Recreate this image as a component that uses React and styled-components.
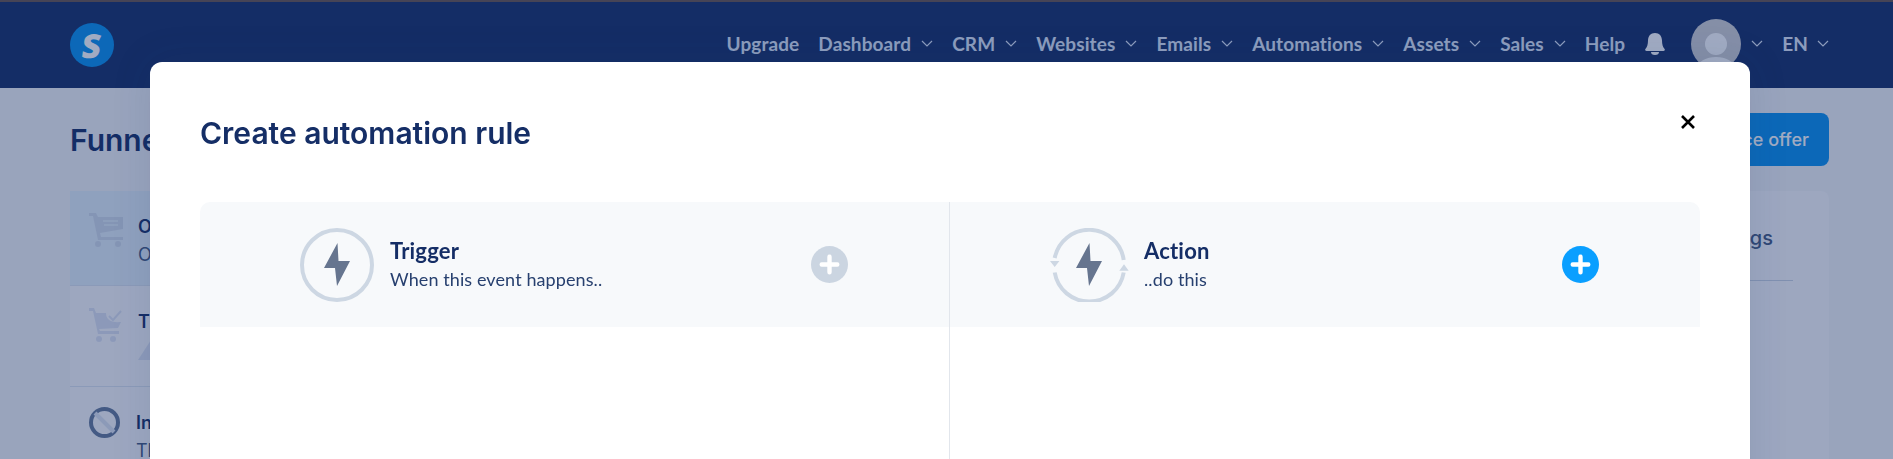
import React from "react";
import styled, { createGlobalStyle } from "styled-components";

const navy = "#152e66";

const GlobalStyle = createGlobalStyle`
html, body {
    margin: 0;
    height: 100%;
    overflow: hidden;
    background: #f2f3f6;
    font-family: "Inter", "Liberation Sans", sans-serif;
    color: ${navy};
}
* { box-sizing: border-box; }
`;

const Header = styled.header`
height: 88px;
border-top: 2px solid #68544b;
background: ${navy};
display: flex;
align-items: center;
justify-content: space-between;
padding: 0 64px 0 70px;
`;

const Logo = styled.div`
width: 44px;
height: 44px;
border-radius: 50%;
background: #0890ee;
color: #fff;
display: flex;
align-items: center;
justify-content: center;
`;

const LogoMark = styled.span`
font: 800 33px "Open Sans", sans-serif;
transform: skewX(-7deg);
`;

const Nav = styled.nav`
display: flex;
align-items: center;
height: 86px;
margin-bottom: 3px;
font: 700 19px "Lato", sans-serif;
letter-spacing: 0.1px;
color: #dee7f7;
`;

const NavItem = styled.a`
display: flex;
align-items: center;
gap: ${(p) => p.$inner ?? 10}px;
margin-right: ${(p) => p.$gap ?? 19}px;
white-space: nowrap;
`;

const Avatar = styled.div`
width: 50px;
height: 50px;
border-radius: 50%;
background: #d0d0d3;
overflow: hidden;
margin-right: 10px;
`;

const AvatarHead = styled.div`
width: 22px;
height: 22px;
border-radius: 50%;
background: #fff;
margin: 14px auto 0;
`;

const AvatarBody = styled.div`
width: 36px;
height: 20px;
border-radius: 50%;
background: #fff;
margin: 2px auto 0;
`;

const Main = styled.main`
padding: 25px 64px 0 70px;
`;

const PageHead = styled.div`
display: flex;
align-items: center;
justify-content: space-between;
height: 53px;
margin-bottom: 25px;
`;

const PageTitle = styled.h1`
margin: 0;
font-size: 30px;
font-weight: 600;
`;

const OfferButton = styled.button`
height: 53px;
padding: 0 20px;
border: 0;
border-radius: 8px;
background: #0890ee;
color: #fff;
font: 500 18px "Inter", sans-serif;
`;

const Columns = styled.div`
display: grid;
grid-template-columns: 360px 1fr;
gap: 30px;
`;

const Sidebar = styled.div`
background: #f8f9fb;
border-radius: 8px 8px 0 0;
`;

const Row = styled.div`
display: flex;
gap: ${(p) => p.$gap ?? 15}px;
height: ${(p) => p.$height}px;
padding: ${(p) => p.$top}px 19px 0;
background: ${(p) => (p.$active ? "#e2eef8" : "#f8f9fb")};
border-bottom: 1px solid #dbe3ee;
`;

const RowText = styled.div`
font-size: 18px;
line-height: 28px;
font-weight: 600;
white-space: nowrap;
padding-top: ${(p) => p.$top ?? 0}px;
`;

const RowSub = styled.div`
display: flex;
align-items: center;
gap: 6px;
font-weight: 400;
color: #44597f;
`;

const SettingsCard = styled.div`
background: #f8f9fb;
border-radius: 8px 8px 0 0;
height: 400px;
padding: 0 36px;
`;

const Tabs = styled.div`
display: flex;
justify-content: flex-end;
height: 90px;
padding: 35px 20px 0 0;
font-size: 20px;
font-weight: 500;
color: #44597f;
border-bottom: 1px solid #c9d3e2;
`;

const Overlay = styled.div`
position: fixed;
inset: 0;
padding: 62px 0 0 150px;
background: rgba(21, 46, 102, 0.4);
`;

const Modal = styled.div`
width: 1600px;
height: 600px;
padding: 52px 50px 0;
border-radius: 12px 12px 0 0;
background: #fff;
box-shadow: 0 0 40px rgba(21, 46, 102, 0.12);
`;

const ModalHead = styled.div`
display: flex;
justify-content: space-between;
height: 88px;
`;

const ModalTitle = styled.h2`
margin: 0;
font-size: 30px;
line-height: 38px;
font-weight: 600;
`;

const CloseButton = styled.button`
width: 16px;
height: 16px;
margin: 0 4px 0 0;
padding: 0;
border: 0;
background: none;
line-height: 0;
`;

const RuleGrid = styled.div`
display: grid;
grid-template-columns: 750px 1fr;
height: 400px;
`;

const RuleColumn = styled.div`
border-right: ${(p) => (p.$divided ? "1px solid #e2e6ec" : "0")};
`;

const RuleHead = styled.div`
height: 125px;
display: flex;
align-items: center;
gap: ${(p) => (p.$side === "left" ? 16 : 15)}px;
padding: 0 101px 0 100px;
background: #f7f9fb;
border-radius: ${(p) => (p.$side === "left" ? "10px 0 0 0" : "0 10px 0 0")};
`;

const RuleText = styled.div`
flex: 1;
`;

const RuleTitle = styled.div`
font: 700 22px/29px "Lato", sans-serif;
letter-spacing: 0.2px;
color: ${navy};
`;

const RuleSub = styled.div`
font: 400 18px/29px "Lato", sans-serif;
letter-spacing: 0.1px;
color: #27406f;
`;

const Chevron = () => (
    <svg width="12" height="7" viewBox="0 0 12 7" fill="none" stroke="currentColor" strokeWidth="1.2">
        <path d="M1 1l5 5 5-5" />
    </svg>
);

const Bell = () => (
    <svg width="20" height="22" viewBox="0 0 20 22" fill="#fff" style={{ marginRight: 26 }}>
        <path d="M10 0c4.500 0 6.800 3 7 7.500.1 4 .8 6.500 2.400 8.300.9 1 .4 2.200-.9 2.200H1.500C.2 18-.3 16.800.6 15.800 2.200 14 2.900 11.500 3 7.500 3.200 3 5.500 0 10 0z" />
        <path d="M6 19h8c0 1.900-1.400 3-4 3s-4-1.100-4-3z" />
    </svg>
);

const Bolt = ({ x, y }) => (
    <path transform={`translate(${x} ${y})`} d="M13.500 0L0 25h11l2 18L26 18H14.500z" fill="#66758f" />
);

const TriggerIcon = () => (
    <svg width="74" height="74" viewBox="0 0 74 74" fill="none" style={{ flexShrink: 0 }}>
        <circle cx="37" cy="37" r="35" stroke="#cdd7e3" strokeWidth="4" />
        <Bolt x={24} y={15} />
    </svg>
);

const ActionIcon = () => (
    <svg width="79" height="74" viewBox="0 0 79 74" fill="none" style={{ flexShrink: 0 }}>
        <path d="M4.700 30A35 35 0 0 1 73.700 32" stroke="#cdd7e3" strokeWidth="4" />
        <path d="M4.700 44.500A35 35 0 0 0 73.700 44.500" stroke="#cdd7e3" strokeWidth="4" />
        <path d="M0 33h9.400l-4.700 6zM69.300 42.700h9.400l-4.700-6.500z" fill="#cdd7e3" />
        <Bolt x={26} y={15} />
    </svg>
);

const PlusIcon = ({ color }) => (
    <svg width="37" height="37" viewBox="0 0 38 38" style={{ flexShrink: 0 }}>
        <circle cx="19" cy="19" r="19" fill={color} />
        <path d="M19 11v16M11 19h16" stroke="#fff" strokeWidth="4.500" strokeLinecap="round" />
    </svg>
);

const CartIcon = () => (
    <svg width="34" height="34" viewBox="0 0 34 34" fill="#cfdbea">
        <path d="M0 0h7l2 4h25v12L11 20l1 4h22v3H9L4 3H0z" />
        <path d="M14 8h15M15 12h14" stroke="#e2eef8" strokeWidth="1.500" />
        <circle cx="9" cy="31" r="3" />
        <circle cx="29" cy="31" r="3" />
    </svg>
);

const CartCheckIcon = () => (
    <svg width="34" height="34" viewBox="0 0 34 34" fill="#dce2f1">
        <path d="M0 0h5l2 5h10c0 6 4 10 15 9l-3 6-19 1 1 2h19v3H9L4 3H0z" />
        <path d="M20 8l4 4 8-9" fill="none" stroke="#dce2f1" strokeWidth="2" />
        <circle cx="10" cy="31" r="3" />
        <circle cx="24" cy="31" r="3" />
    </svg>
);

const BanIcon = () => (
    <svg width="31" height="31" viewBox="0 0 31 31" fill="none" stroke="#647898" strokeWidth="4" style={{ marginTop: 20 }}>
        <circle cx="15.500" cy="15.500" r="13.500" />
        <path d="M6 6l19 19" stroke="#dde3ee" />
    </svg>
);

const WarningIcon = () => (
    <svg width="26" height="20" viewBox="0 0 26 20" fill="#dce2f1">
        <path d="M13 0l13 20H0z" />
    </svg>
);

const CloseIcon = () => (
    <svg width="14" height="14" viewBox="0 0 14 14" stroke="#000" strokeWidth="2.600">
        <path d="M1 1l12 12M13 1L1 13" />
    </svg>
);

const menu = [
    { label: "Upgrade" },
    { label: "Dashboard", drop: true },
    { label: "CRM", drop: true },
    { label: "Websites", drop: true },
    { label: "Emails", drop: true },
    { label: "Automations", drop: true },
    { label: "Assets", drop: true },
    { label: "Sales", drop: true },
    { label: "Help", gap: 20 },
];

export default function App() {
    return (
        <>
            <GlobalStyle />
            <Header>
                <Logo>
                    <LogoMark>S</LogoMark>
                </Logo>
                <Nav>
                    {menu.map((item) => (
                        <NavItem key={item.label} $gap={item.gap}>
                            {item.label}
                            {item.drop && <Chevron />}
                        </NavItem>
                    ))}
                    <Bell />
                    <Avatar>
                        <AvatarHead />
                        <AvatarBody />
                    </Avatar>
                    <NavItem $gap={19}>
                        <Chevron />
                    </NavItem>
                    <NavItem $gap={0} $inner={9}>
                        EN
                        <Chevron />
                    </NavItem>
                </Nav>
            </Header>

            <Main>
                <PageHead>
                    <PageTitle>Funnel steps</PageTitle>
                    <OfferButton>Add a price offer</OfferButton>
                </PageHead>
                <Columns>
                    <Sidebar>
                        <Row $active $height={95} $top={22}>
                            <CartIcon />
                            <RowText>
                                Order form
                                <RowSub>Order page</RowSub>
                            </RowText>
                        </Row>
                        <Row $height={101} $top={22}>
                            <CartCheckIcon />
                            <RowText>
                                Thank you
                                <RowSub>
                                    <WarningIcon />
                                    Not published
                                </RowSub>
                            </RowText>
                        </Row>
                        <Row $height={80} $top={0} $gap={16}>
                            <BanIcon />
                            <RowText $top={22}>
                                Inactive
                                <RowSub>This step is off</RowSub>
                            </RowText>
                        </Row>
                    </Sidebar>
                    <SettingsCard>
                        <Tabs>Settings</Tabs>
                    </SettingsCard>
                </Columns>
            </Main>

            <Overlay>
                <Modal>
                    <ModalHead>
                        <ModalTitle>Create automation rule</ModalTitle>
                        <CloseButton>
                            <CloseIcon />
                        </CloseButton>
                    </ModalHead>
                    <RuleGrid>
                        <RuleColumn $divided>
                            <RuleHead $side="left">
                                <TriggerIcon />
                                <RuleText>
                                    <RuleTitle>Trigger</RuleTitle>
                                    <RuleSub>When this event happens..</RuleSub>
                                </RuleText>
                                <PlusIcon color="#cbd5e1" />
                            </RuleHead>
                        </RuleColumn>
                        <RuleColumn>
                            <RuleHead $side="right">
                                <ActionIcon />
                                <RuleText>
                                    <RuleTitle>Action</RuleTitle>
                                    <RuleSub>..do this</RuleSub>
                                </RuleText>
                                <PlusIcon color="#0a9fff" />
                            </RuleHead>
                        </RuleColumn>
                    </RuleGrid>
                </Modal>
            </Overlay>
        </>
    );
}
